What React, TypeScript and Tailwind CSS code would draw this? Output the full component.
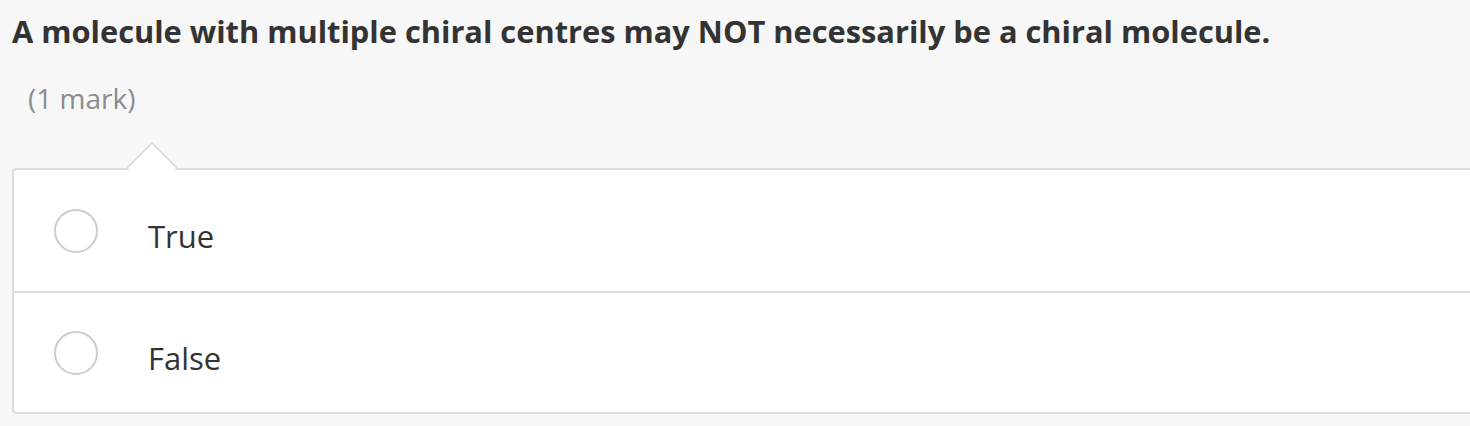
export default function App() {
  const options = ["True", "False"];

  return (
    <div className="h-[426px] w-full overflow-hidden bg-[#f7f7f7] font-['Open_Sans',sans-serif] text-[#333]">
      {/* Question */}
      <h1 className="pl-[12px] pt-[9px] text-[30.8px] font-bold leading-[44px]">
        A molecule with multiple chiral centres may NOT necessarily be a chiral molecule.
      </h1>
      <p className="mt-[29px] pl-[28px] text-[28px] leading-[32px] text-[#8c8c8c]">(1 mark)</p>

      {/* Answer options */}
      <div className="relative ml-[12px] mt-[54px] rounded-l-[4px] border-y-2 border-l-2 border-[#dddddd] bg-white">
        <div className="absolute left-[120px] top-[-21px] h-[36px] w-[36px] rotate-45 border-l-2 border-t-2 border-[#dddddd] bg-white" />
        {options.map((opt, i) => (
          <div
            key={opt}
            className={`relative flex h-[121px] items-center ${i > 0 ? "border-t-2 border-[#dddddd]" : ""}`}
          >
            <span className="ml-[40px] h-[44px] w-[44px] rounded-full border-2 border-[#cccccc] bg-white" />
            <span className="ml-[50px] pt-[12px] text-[31px]">{opt}</span>
          </div>
        ))}
      </div>
    </div>
  );
}
